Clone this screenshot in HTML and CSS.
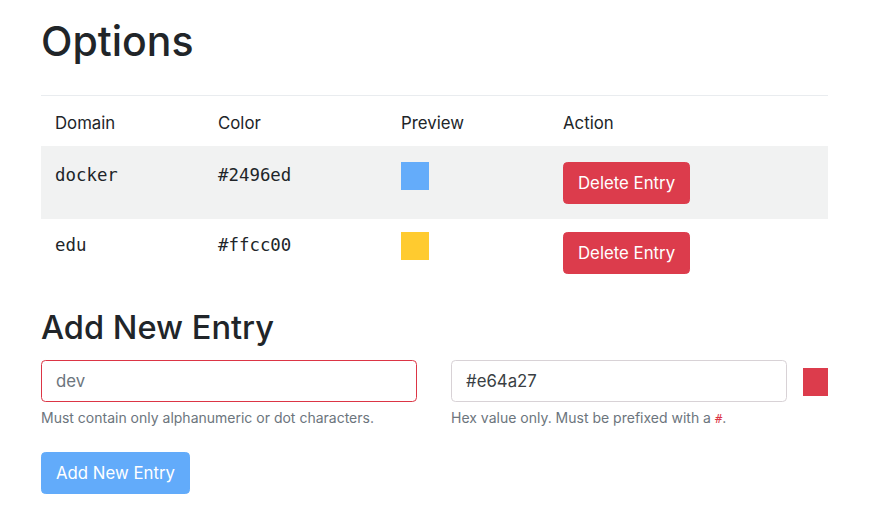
FILE: index.html
```html
<!DOCTYPE html>
<html lang="en">
<head>
<meta charset="utf-8">
<title>Options</title>
<link rel="stylesheet" href="styles.css">
</head>
<body>
<main class="container">
  <h1 class="title">Options</h1>
  <table class="entries">
    <thead>
      <tr>
        <th class="col-domain">Domain</th>
        <th class="col-color">Color</th>
        <th class="col-preview">Preview</th>
        <th class="col-action">Action</th>
      </tr>
    </thead>
    <tbody>
      <tr class="striped">
        <td class="mono">docker</td>
        <td class="mono">#2496ed</td>
        <td><span class="swatch swatch-blue"></span></td>
        <td><button class="btn btn-danger">Delete Entry</button></td>
      </tr>
      <tr>
        <td class="mono">edu</td>
        <td class="mono">#ffcc00</td>
        <td><span class="swatch swatch-yellow"></span></td>
        <td><button class="btn btn-danger">Delete Entry</button></td>
      </tr>
    </tbody>
  </table>

  <h2 class="subtitle">Add New Entry</h2>
  <form class="add-form">
    <div class="field field-domain">
      <input class="input input-invalid" type="text" placeholder="dev">
      <small class="help">Must contain only alphanumeric or dot characters.</small>
    </div>
    <div class="field field-color">
      <input class="input" type="text" value="#e64a27">
      <small class="help">Hex value only. Must be prefixed with a <code class="hash">#</code>.</small>
    </div>
    <span class="new-swatch"></span>
  </form>
  <button class="btn btn-primary-disabled" type="button">Add New Entry</button>
</main>
</body>
</html>
```

FILE: styles.css
```css
* { box-sizing: border-box; }

html, body {
  margin: 0;
  padding: 0;
  background: #ffffff;
}

body {
  font-family: Inter, "Liberation Sans", Arial, sans-serif;
  font-size: 16.8px;
  line-height: 26.4px;
  color: #212529;
}

.container {
  width: 787px;
  margin-left: 41px;
}

.title {
  font-size: 41px;
  font-weight: 500;
  line-height: 50px;
  margin: 16px 0 29px;
}

.entries {
  width: 787px;
  border-collapse: collapse;
  border-top: 1px solid #e9ecef;
}

.entries th {
  text-align: left;
  font-weight: 400;
  padding: 14px 14px 10px;
  vertical-align: top;
}

.col-domain { width: 163px; }
.col-color { width: 183px; }
.col-preview { width: 162px; }
.col-action { width: 279px; }

.entries td {
  padding: 13px 14px 15px;
  vertical-align: top;
  height: 70px;
}

.entries tr.striped td {
  padding-top: 16px;
  height: 73px;
  background: #f1f2f2;
}

.mono {
  font-family: "DejaVu Sans Mono", "Liberation Mono", monospace;
  font-size: 17.4px;
}

.swatch {
  display: block;
  width: 28px;
  height: 28px;
}

.swatch-blue { background: #64acfa; }
.swatch-yellow { background: #ffcb2f; }

.btn {
  display: inline-block;
  height: 42px;
  padding: 0 14px;
  border: 1px solid transparent;
  border-radius: 4.4px;
  font-family: Inter, "Liberation Sans", Arial, sans-serif;
  font-size: 16.8px;
  line-height: 40px;
  color: #ffffff;
  cursor: pointer;
}

.btn-danger {
  background: #dc3c4c;
  border-color: #dc3c4c;
}

.btn-primary-disabled {
  background: #62abfa;
  border-color: #62abfa;
  margin-top: 22px;
  padding: 0 14px;
}

.subtitle {
  font-size: 32.6px;
  font-weight: 500;
  line-height: 42px;
  margin: 17px 0 12px;
}

.add-form {
  display: flex;
  align-items: flex-start;
}

.field {
  display: flex;
  flex-direction: column;
}

.field-domain { width: 376px; margin-right: 34px; }
.field-color { width: 336px; margin-right: 16px; }

.input {
  height: 42px;
  width: 100%;
  padding: 0 14px;
  border: 1px solid #d8d2d6;
  border-radius: 4.4px;
  font-family: Inter, "Liberation Sans", Arial, sans-serif;
  font-size: 16.8px;
  color: #3a3f44;
  background: #ffffff;
}

.input::placeholder { color: #6c757d; }

.input-invalid { border-color: #dc3545; }

.help {
  margin-top: 4.5px;
  font-size: 14px;
  line-height: 21px;
  color: #6c757d;
}

.hash {
  font-family: "DejaVu Sans Mono", monospace;
  font-size: 12px;
  color: #dc3545;
}

.new-swatch {
  display: block;
  width: 25px;
  height: 28px;
  margin-top: 8px;
  background: #dc3c4c;
}
```
